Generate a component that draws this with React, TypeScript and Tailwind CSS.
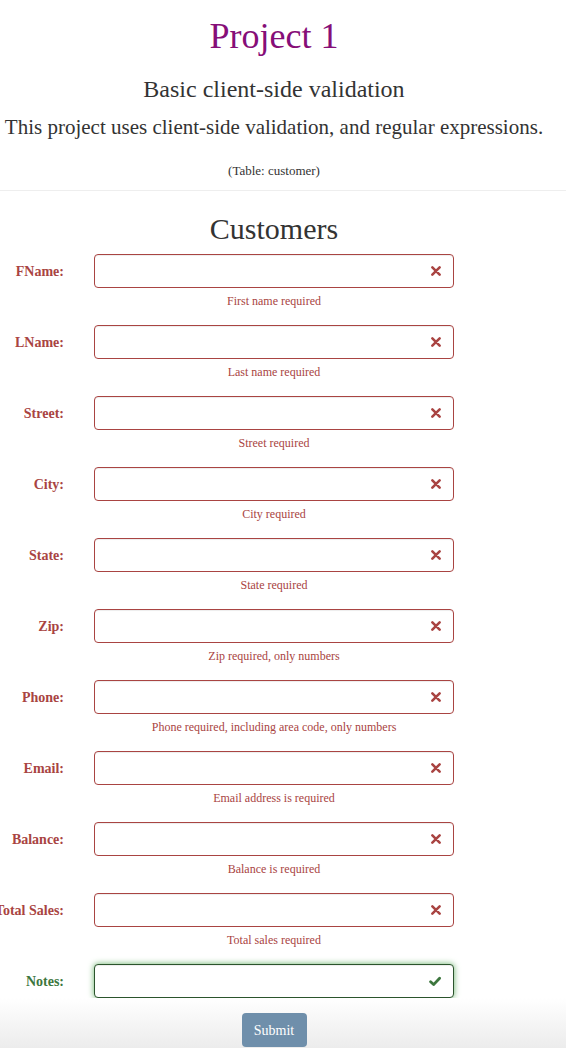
import React from 'react'

type Field = {
  label: string
  help?: string
  ok?: boolean
}

const FIELDS: Field[] = [
  { label: 'FName:', help: 'First name required' },
  { label: 'LName:', help: 'Last name required' },
  { label: 'Street:', help: 'Street required' },
  { label: 'City:', help: 'City required' },
  { label: 'State:', help: 'State required' },
  { label: 'Zip:', help: 'Zip required, only numbers' },
  { label: 'Phone:', help: 'Phone required, including area code, only numbers' },
  { label: 'Email:', help: 'Email address is required' },
  { label: 'Balance:', help: 'Balance is required' },
  { label: 'Total Sales:', help: 'Total sales required' },
  { label: 'Notes:', ok: true },
]

function RemoveIcon() {
  return (
    <svg width="10" height="10" viewBox="0 0 11 11" className="text-[#a94442]">
      <path d="M1.5 1.5 L9.5 9.5 M9.5 1.5 L1.5 9.5" stroke="currentColor" strokeWidth="2.8" strokeLinecap="round" />
    </svg>
  )
}

function OkIcon() {
  return (
    <svg width="12" height="11" viewBox="0 0 12 11" className="text-[#3c763d]">
      <path d="M1.6 5.8 L4.6 8.6 L10.6 2.2" stroke="currentColor" strokeWidth="2.8" fill="none" strokeLinecap="round" strokeLinejoin="round" />
    </svg>
  )
}

function FormRow({ field }: { field: Field }) {
  const labelColor = field.ok ? 'text-[#3c763d]' : 'text-[#a94442]'
  return (
    <div className="flex flex-col">
      <div className="flex items-center">
        <label className={`w-[64px] shrink-0 text-right text-[14px] font-bold whitespace-nowrap ${labelColor}`}>
          <span className="float-right">{field.label}</span>
        </label>
        <div
          className={`ml-[30px] flex h-[34px] w-[360px] items-center justify-end rounded-[4px] border bg-white pr-[12px] ${
            field.ok
              ? 'border-[#2b542c] shadow-[inset_0_1px_1px_rgba(0,0,0,0.075),0_0_6px_#67b168]'
              : 'border-[#a94442] shadow-[inset_0_1px_1px_rgba(0,0,0,0.075)]'
          }`}
        >
          {field.ok ? <OkIcon /> : <RemoveIcon />}
        </div>
      </div>
      {field.help && (
        <div className="ml-[94px] mt-[5px] mb-[15px] w-[360px] text-center text-[12px] leading-[17px] text-[#a94442]">
          {field.help}
        </div>
      )}
    </div>
  )
}

export default function App() {
  return (
    <div className="h-[1048px] overflow-hidden bg-white font-['Liberation_Serif',serif] text-[#333]">
      <header className="w-[548px] text-center">
        <h1 className="pt-[16px] text-[36px] leading-[40px] text-[#860e78]">Project 1</h1>
        <h3 className="mt-[20px] text-[24px] leading-[26px]">Basic client-side validation</h3>
        <p className="mt-[13px] text-[21px] leading-[24px] whitespace-nowrap">
          This project uses client-side validation, and regular expressions.
        </p>
        <p className="mt-[24px] text-[13px] leading-[16px]">(Table: customer)</p>
      </header>
      <hr className="mt-[11px] border-t border-[#eee]" />
      <h2 className="mt-[21px] w-[548px] text-center text-[30px] leading-[33px]">Customers</h2>
      <form className="mt-[9px] flex flex-col" onSubmit={e => e.preventDefault()}>
        {FIELDS.map(f => (
          <FormRow key={f.label} field={f} />
        ))}
        <div className="flex h-[50px] justify-center bg-gradient-to-b from-white to-[#ececec] pt-[15px]">
          <button
            type="submit"
            className="-ml-[18px] h-[34px] w-[65px] rounded-[4px] bg-[#6f8fab] text-[14px] text-white"
          >
            Submit
          </button>
        </div>
      </form>
    </div>
  )
}
